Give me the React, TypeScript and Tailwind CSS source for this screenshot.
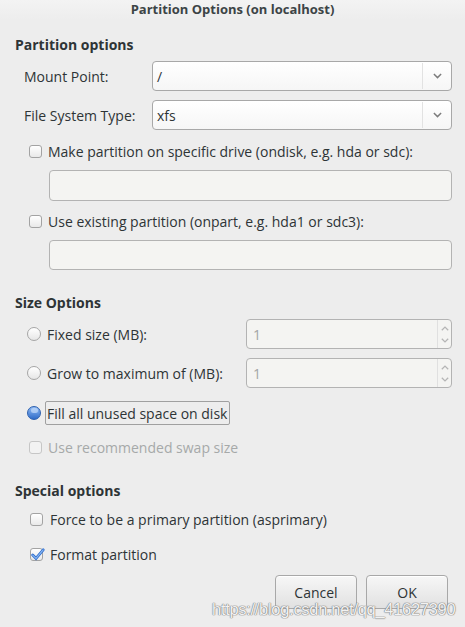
import React from "react";

const font = { fontFamily: '"Open Sans", "DejaVu Sans", sans-serif' };

function Chevron({ up = false, className = "" }: { up?: boolean; className?: string }) {
  return (
    <svg viewBox="0 0 10 6" className={className} fill="none" stroke="currentColor" strokeWidth="1.6">
      {up ? <path d="M1 5.2 5 1.2 9 5.2" /> : <path d="M1 0.8 5 4.8 9 0.8" />}
    </svg>
  );
}

function Check({ checked = false, disabled = false }: { checked?: boolean; disabled?: boolean }) {
  return (
    <span
      className={`relative inline-block h-[13px] w-[13px] shrink-0 rounded-[3px] border ${
        disabled ? "border-[#c6c6c6] bg-[#f2f2f2]" : "border-[#a3a3a3] bg-gradient-to-b from-[#ffffff] to-[#e9e9e9]"
      }`}
    >
      {checked && (
        <svg viewBox="0 0 14 14" className="absolute -left-[1px] -top-[2px] h-[15px] w-[15px]">
          <path d="M2.5 7.5 5.6 10.6 12.3 2.6" fill="none" stroke="#2f6fd0" strokeWidth="2.6" strokeLinecap="round" />
          <path d="M2.5 7.5 5.6 10.6 12.3 2.6" fill="none" stroke="#8cb8f0" strokeWidth="1" strokeLinecap="round" />
        </svg>
      )}
    </span>
  );
}

function Radio({ on = false }: { on?: boolean }) {
  return on ? (
    <span className="flex h-[14px] w-[14px] shrink-0 items-start justify-center rounded-full border border-[#2c5fae] bg-gradient-to-b from-[#8fbaf3] to-[#2f6cc9]">
      <span className="mt-[1px] h-[5px] w-[7px] rounded-full bg-[#c4dcfb]/70" />
    </span>
  ) : (
    <span className="inline-block h-[14px] w-[14px] shrink-0 rounded-full border border-[#a6a6a6] bg-gradient-to-b from-[#ffffff] to-[#e6e6e6]" />
  );
}

function Combo({ value }: { value: string }) {
  return (
    <div className="flex h-[30px] w-[300px] items-stretch rounded-[4px] border border-[#a8a8a8] bg-gradient-to-b from-[#ffffff] to-[#f6f6f6]">
      <span className="flex flex-1 items-center pl-[4px] text-[#2e3436]">{value}</span>
      <span className="my-[1px] w-px bg-[#e2e2e2]" />
      <span className="flex w-[28px] items-center justify-center text-[#7c7c7c]">
        <Chevron className="h-[6px] w-[9px]" />
      </span>
    </div>
  );
}

function Spin() {
  return (
    <div className="flex h-[30px] w-[206px] items-stretch rounded-[4px] border border-[#b3b3b3] bg-[#f4f4f2]">
      <span className="flex flex-1 items-center pl-[6px] text-[#a3a5a5]">1</span>
      <span className="w-px bg-[#e0e0e0]" />
      <span className="flex w-[13px] flex-col items-center justify-around py-[2px] text-[#b5b5b5]">
        <Chevron up className="h-[5px] w-[8px]" />
        <Chevron className="h-[5px] w-[8px]" />
      </span>
    </div>
  );
}

function Button({ children }: { children: React.ReactNode }) {
  return (
    <div className="flex h-[34px] w-[82px] items-center justify-center rounded-[4px] border border-[#a8a8a8] bg-gradient-to-b from-[#f7f7f7] to-[#e1e1e1] text-[#2e3436] shadow-[inset_0_1px_0_#ffffff]">
      {children}
    </div>
  );
}

export default function App() {
  return (
    <div
      className="relative h-[627px] w-[465px] overflow-hidden bg-[#ededed] text-[14px] text-[#2e3436]"
      style={font}
    >
      <div className="flex h-[20px] items-center justify-center bg-gradient-to-b from-[#f3f3f3] to-[#ededed] text-[13px] font-bold text-[#3c4446]">
        Partition Options (on localhost)
      </div>

      <div className="flex flex-col pl-[15px] pr-[13px]">
        <div className="mt-[15px] flex h-[18px] items-center font-bold">Partition options</div>

        <div className="mt-[8px] flex items-center pl-[9px]">
          <span className="w-[128px]">Mount Point:</span>
          <Combo value="/" />
        </div>
        <div className="mt-[9px] flex items-center pl-[9px]">
          <span className="w-[128px]">File System Type:</span>
          <Combo value="xfs" />
        </div>

        <div className="mt-[13px] flex h-[16px] items-center gap-[6px] pl-[14px]">
          <Check />
          <span>Make partition on specific drive (ondisk, e.g. hda or sdc):</span>
        </div>
        <div className="ml-[34px] mt-[11px] h-[31px] rounded-[4px] border border-[#b3b3b3] bg-[#f4f4f2]" />

        <div className="mt-[12px] flex h-[16px] items-center gap-[6px] pl-[14px]">
          <Check />
          <span>Use existing partition (onpart, e.g. hda1 or sdc3):</span>
        </div>
        <div className="ml-[34px] mt-[11px] h-[30px] rounded-[4px] border border-[#b3b3b3] bg-[#f4f4f2]" />

        <div className="mt-[23px] flex h-[18px] items-center font-bold">Size Options</div>

        <div className="mt-[8px] flex items-center justify-between pl-[12px]">
          <span className="flex items-center gap-[6px]">
            <Radio />
            Fixed size (MB):
          </span>
          <Spin />
        </div>
        <div className="mt-[9px] flex items-center justify-between pl-[12px]">
          <span className="flex items-center gap-[6px]">
            <Radio />
            Grow to maximum of (MB):
          </span>
          <Spin />
        </div>

        <div className="mt-[13px] flex h-[24px] items-center gap-[4px] pl-[12px]">
          <Radio on />
          <span className="flex h-[24px] items-center rounded-[2px] border border-[#a0a0a0] px-[1px] pr-[2px]">
            Fill all unused space on disk
          </span>
        </div>

        <div className="mt-[14px] flex h-[16px] items-center gap-[6px] pl-[14px] text-[#a6a9a9]">
          <Check disabled />
          <span>Use recommended swap size</span>
        </div>

        <div className="mt-[26px] flex h-[18px] items-center font-bold">Special options</div>

        <div className="mt-[12px] flex h-[16px] items-center gap-[7px] pl-[15px]">
          <Check />
          <span>Force to be a primary partition (asprimary)</span>
        </div>
        <div className="mt-[19px] flex h-[16px] items-center gap-[7px] pl-[15px]">
          <Check checked />
          <span>Format partition</span>
        </div>

        <div className="mt-[13px] flex justify-end gap-[9px] pr-[4px]">
          <Button>Cancel</Button>
          <Button>OK</Button>
        </div>
      </div>

      <div
        className="absolute left-[212px] top-[597px] text-[16.5px] tracking-[-0.3px] text-[#ffffff]/90 [text-shadow:0_0_1px_#7a7a7a,0_0_1px_#7a7a7a,0_0_1px_#7a7a7a]"
        style={{ fontFamily: '"Liberation Sans", Arial, sans-serif' }}
      >
        https://blog.csdn.net/qq_41627390
      </div>
    </div>
  );
}
